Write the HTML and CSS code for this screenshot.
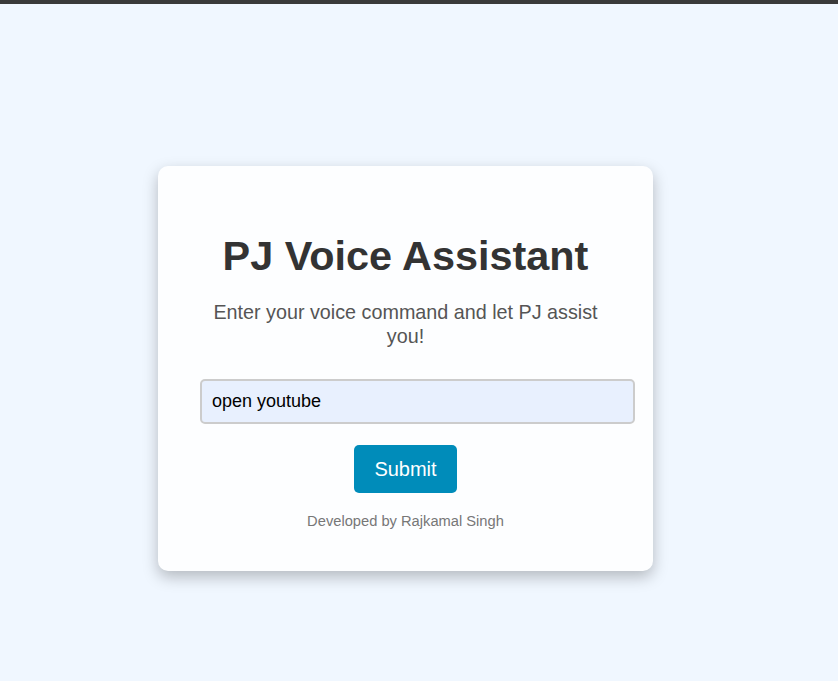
FILE: index.html
```html
<!DOCTYPE html>
<html lang="en">
<head>
<meta charset="utf-8">
<title>PJ Voice Assistant</title>
<link rel="stylesheet" href="styles.css">
</head>
<body>
<div class="topbar"></div>
<main class="page">
  <div class="card">
    <h1 class="title">PJ Voice Assistant</h1>
    <p class="subtitle">Enter your voice command and let PJ assist you!</p>
    <form class="form">
      <input class="command" type="text" value="open youtube">
      <button class="submit" type="button">Submit</button>
    </form>
    <p class="footer">Developed by Rajkamal Singh</p>
  </div>
</main>
</body>
</html>
```

FILE: styles.css
```css
html, body {
  margin: 0;
  padding: 0;
}
body {
  background: #f0f7ff;
  font-family: "Liberation Sans", Arial, sans-serif;
  height: 681px;
  overflow: hidden;
}
.topbar {
  height: 4px;
  background: #3a3a3a;
}
.page {
  padding-top: 162px;
  padding-left: 158px;
}
.card {
  width: 411px;
  padding: 40px 42px 42px;
  background: #fdfeff;
  border-radius: 10px;
  box-shadow: 0 6px 15px rgba(0, 0, 0, 0.25);
  text-align: center;
}
.title {
  margin: 27px 0 0;
  font-size: 41.4px;
  font-weight: bold;
  color: #333;
  line-height: 46px;
}
.subtitle {
  margin: 21px 0 0;
  font-size: 19.75px;
  line-height: 24px;
  color: #555;
}
.form {
  display: flex;
  flex-direction: column;
  align-items: center;
}
.command {
  box-sizing: content-box;
  align-self: flex-start;
  width: 100%;
  margin: 31px 0 0;
  padding: 10px;
  height: 21px;
  border: 2px solid #ccc;
  border-radius: 5px;
  background: #e8f0fe;
  font-family: "Liberation Sans", Arial, sans-serif;
  font-size: 18px;
  color: #000;
  outline: none;
}
.submit {
  margin-top: 21px;
  padding: 12px 20px;
  height: 48px;
  border: none;
  border-radius: 5px;
  background: #008cba;
  color: #fff;
  font-family: "Liberation Sans", Arial, sans-serif;
  font-size: 20px;
  line-height: 24px;
}
.footer {
  margin: 20px 0 0;
  font-size: 14.7px;
  line-height: 16px;
  color: #777;
}
```
